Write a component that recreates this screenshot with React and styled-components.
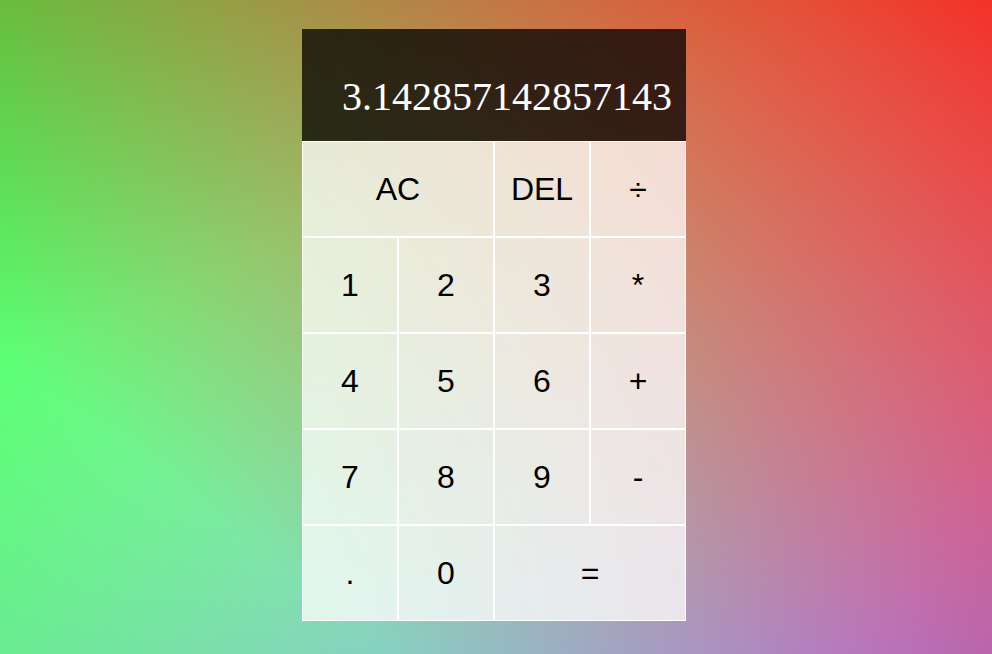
import React from "react";
import styled, { createGlobalStyle } from "styled-components";

const GlobalStyle = createGlobalStyle`
  *, *::before, *::after { box-sizing: border-box; }
  html, body { margin: 0; padding: 0; background: #fff; }
`;

const Page = styled.div`
  display: flex;
  justify-content: center;
  align-items: flex-start;
  min-height: 100vh;
  padding: 29px 4px 0 0;
  background-color: #fff;
  background-image:
    linear-gradient(217deg, rgba(255, 0, 0, 0.8), rgba(255, 0, 0, 0) 70.71%),
    linear-gradient(127deg, rgba(0, 255, 40, 0.8), rgba(0, 255, 40, 0) 85%),
    linear-gradient(336deg, rgba(0, 0, 255, 0.5), rgba(0, 0, 255, 0) 70.71%);
  background-size: 100% 125%;
  background-position: top left;
  background-repeat: no-repeat;
`;

const Grid = styled.div`
  display: grid;
  grid-template-columns: repeat(4, 96px);
  grid-template-rows: 112px repeat(5, 96px);
`;

const Display = styled.div`
  grid-column: 1 / -1;
  background-color: rgba(0, 0, 0, 0.75);
  display: flex;
  flex-direction: column;
  align-items: flex-end;
  justify-content: space-around;
  padding: 10px;
  word-wrap: break-word;
  word-break: break-all;
  font-family: "Liberation Serif", "Times New Roman", serif;
`;

const Previous = styled.div`
  color: rgba(255, 255, 255, 0.75);
  font-size: 24px;
`;

const Current = styled.div`
  color: #fff;
  font-size: 40px;
  padding-right: 4px;
`;

const Key = styled.button`
  cursor: pointer;
  font-family: "Liberation Sans", Arial, sans-serif;
  font-size: 32px;
  color: #000;
  border: 1px solid #fff;
  outline: none;
  padding: 0;
  margin: 0;
  background-color: rgba(255, 255, 255, 0.75);
  grid-column: ${(p) => (p.$wide ? "span 2" : "auto")};
`;

const keys = [
  ["AC", true], ["DEL"], ["÷"],
  ["1"], ["2"], ["3"], ["*"],
  ["4"], ["5"], ["6"], ["+"],
  ["7"], ["8"], ["9"], ["-"],
  ["."], ["0"], ["=", true],
];

export default function App() {
  return (
    <>
      <GlobalStyle />
      <Page>
        <Grid>
          <Display>
            <Previous></Previous>
            <Current>3.142857142857143</Current>
          </Display>
          {keys.map(([label, wide]) => (
            <Key key={label} $wide={wide}>
              {label}
            </Key>
          ))}
        </Grid>
      </Page>
    </>
  );
}
